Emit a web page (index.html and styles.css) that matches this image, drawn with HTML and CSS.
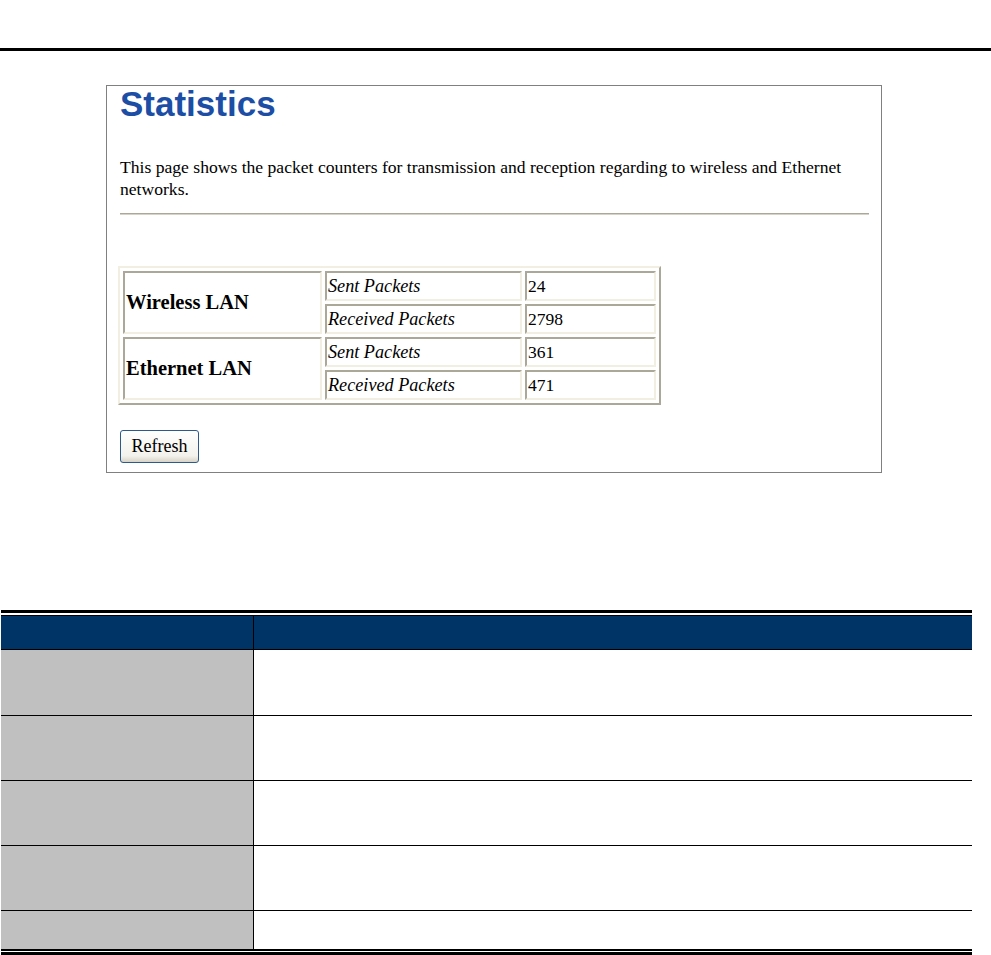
FILE: index.html
```html
<!DOCTYPE html>
<html lang="en">
<head>
  <meta charset="utf-8" />
  <title>Statistics</title>
  <link rel="stylesheet" href="styles.css">
</head>
<body>

<div class="rule"></div>

<div class="shot">
  <h1 class="title">Statistics</h1>
  <p class="intro">This page shows the packet counters for transmission and reception regarding to wireless and Ethernet networks.</p>
  <hr class="sep" />

  <table class="stats">
    <tr>
      <td class="iface" rowspan="2">Wireless LAN</td>
      <td class="label">Sent Packets</td>
      <td class="num">24</td>
    </tr>
    <tr>
      <td class="label">Received Packets</td>
      <td class="num">2798</td>
    </tr>
    <tr>
      <td class="iface" rowspan="2">Ethernet LAN</td>
      <td class="label">Sent Packets</td>
      <td class="num">361</td>
    </tr>
    <tr>
      <td class="label">Received Packets</td>
      <td class="num">471</td>
    </tr>
  </table>

  <button class="refresh" type="button">Refresh</button>
</div>

<div class="params">
  <table class="param-table">
    <tr class="head"><th class="name"></th><th></th></tr>
    <tr class="first"><td class="name"></td><td></td></tr>
    <tr><td class="name"></td><td></td></tr>
    <tr><td class="name"></td><td></td></tr>
    <tr><td class="name"></td><td></td></tr>
    <tr class="last"><td class="name"></td><td></td></tr>
  </table>
</div>

</body>
</html>
```

FILE: styles.css
```css
html {
  overflow: hidden;
}

body {
  margin: 0;
  padding-top: 48px;
  background: #fff;
  font-family: "Liberation Serif", "Times New Roman", serif;
  color: #000;
}

.rule {
  border-top: 3px solid #000;
}

/* screenshot of the router page */
.shot {
  width: 749px;
  margin: 34px 0 0 106px;
  padding: 0 12px 9px 13px;
  border: 1px solid #808080;
}

.title {
  margin: 0;
  font-family: "Liberation Sans", Arial, sans-serif;
  font-size: 35px;
  line-height: 36px;
  font-weight: bold;
  color: #1c4ea6;
}

.intro {
  margin: 34px 0 0 0;
  font-size: 17.6px;
  line-height: 22px;
}

.sep {
  height: 0;
  margin: 13px 0 0 0;
  border: 0;
  border-top: 1px solid #aca899;
  border-bottom: 1px solid #d6d3c6;
}

.stats {
  margin: 51px 0 0 -2px;
  border-spacing: 3px;
  border: 2px solid;
  border-color: #f1efe2 #aca899 #aca899 #f1efe2;
}

.stats td {
  height: 26px;
  padding: 0 1px;
  border: 2px solid;
  border-color: #aca899 #f1efe2 #f1efe2 #aca899;
  font-size: 17.5px;
  vertical-align: middle;
}

.stats .iface {
  width: 193px;
  font-size: 20.5px;
  font-weight: bold;
}

.stats .label {
  width: 191px;
  font-size: 18.2px;
  font-style: italic;
}

.stats .num {
  width: 125px;
}

.refresh {
  display: block;
  width: 79px;
  height: 33px;
  margin: 25px 0 0 0;
  padding: 0;
  border: 1px solid #2c5a8a;
  border-radius: 3px;
  background: linear-gradient(to bottom, #ffffff, #f3f2ec 80%, #d8d3c8);
  font-family: "Liberation Serif", "Times New Roman", serif;
  font-size: 18px;
  color: #000;
}

/* parameter table below the screenshot */
.params {
  width: 971px;
  margin: 137px 0 0 1px;
  padding: 2px 0 1px 0;
  border-top: 3px solid #000;
  border-bottom: 3px solid #000;
}

.param-table {
  width: 100%;
  border-collapse: collapse;
  border-top: 1px solid #000;
  border-bottom: 2px solid #000;
}

.param-table th,
.param-table td {
  height: 64px;
  padding: 0;
  border-top: 1px solid #000;
}

.param-table .name {
  width: 252px;
  background: #c0c0c0;
  border-right: 1px solid #000;
}

.param-table .head th {
  height: 33px;
  background: #003366;
}

.param-table .first td {
  height: 65px;
}

.param-table .last td {
  height: 38px;
}
```
